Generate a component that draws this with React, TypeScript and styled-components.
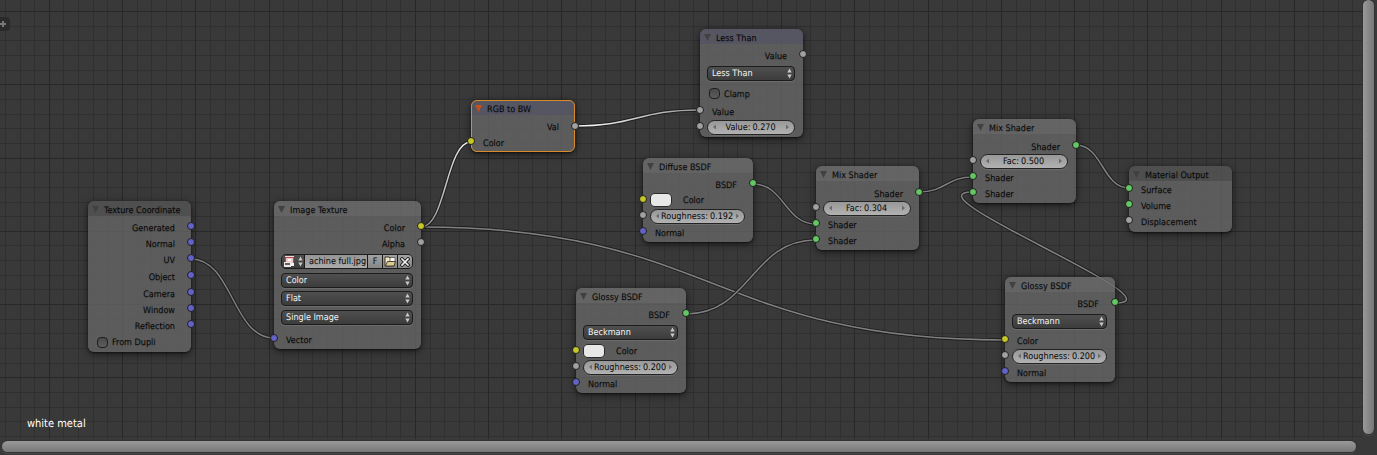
import React, { useId } from "react";
import styled, { createGlobalStyle, css } from "styled-components";

const GlobalStyle = createGlobalStyle`
  *, *::before, *::after { box-sizing: border-box; }
  body {
    margin: 0;
    background: #393939;
    font-family: "DejaVu Sans Condensed", "DejaVu Sans", sans-serif;
    font-size: 9px;
    line-height: 14px;
    color: #050505;
    text-rendering: geometricPrecision;
  }
  button, input, select {
    font: inherit;
    color: inherit;
    text-rendering: inherit;
    margin: 0;
    padding: 0;
    border: 0;
    background: none;
    appearance: none;
    border-radius: 0;
    outline: none;
  }
`;

/* ---------- editor shell ---------- */

const Editor = styled.main`
  display: grid;
  grid-template-columns: 1fr 15px;
  grid-template-rows: 1fr 16px;
  height: 100vh;
  overflow: hidden;
`;

const Canvas = styled.section`
  position: relative;
  overflow: hidden;
`;

const Layer = styled.svg`
  position: absolute;
  inset: 0;
  width: 100%;
  height: 100%;
`;

const ScrollBar = styled.div<{ $vertical?: boolean }>`
  border-radius: 6px;
  ${(p) =>
    p.$vertical
      ? css`
          margin: 0 3px 5px 1px;
          background: linear-gradient(90deg, #999, #777);
        `
      : css`
          margin: 2px 6px 3px 2px;
          background: linear-gradient(#999, #777);
        `}
  box-shadow: 0 0 0 1px #323232, 0 2px 0 #484848;
`;

const RegionToggle = styled.button`
  position: absolute;
  left: 0;
  top: 17px;
  width: 10px;
  height: 14px;
  display: flex;
  align-items: center;
  background: #2a2a2a;
  border-radius: 0 4px 4px 0;
`;

const MaterialName = styled.p`
  position: absolute;
  left: 27px;
  bottom: 7px;
  margin: 0;
  font-size: 11px;
  line-height: 16px;
  color: #fff;
`;

/* ---------- node parts ---------- */

type Tone = "input" | "texture" | "converter" | "shader" | "output";

const headerColor: Record<Tone, string> = {
  input: "rgba(60, 60, 60, 0.4)",
  texture: "rgba(122, 122, 122, 0.25)",
  converter: "rgba(80, 80, 108, 0.45)",
  shader: "rgba(122, 122, 122, 0.25)",
  output: "rgba(60, 60, 60, 0.4)",
};

const NodeBox = styled.article<{ $x: number; $y: number; $w: number; $active?: boolean }>`
  position: absolute;
  left: ${(p) => p.$x}px;
  top: ${(p) => p.$y}px;
  width: ${(p) => p.$w}px;
  border-radius: 6px;
  background: rgba(104, 104, 104, 0.75);
  box-shadow: 0 1px 2px rgba(0, 0, 0, 0.5), 0 2px 8px rgba(0, 0, 0, 0.55);
  text-shadow: 0 1px 1px rgba(0, 0, 0, 0.18);

  ${(p) =>
    p.$active &&
    css`
      &::before {
        content: "";
        position: absolute;
        inset: 0;
        border: 1px solid #d98a2b;
        border-radius: 6px;
        pointer-events: none;
      }
    `}
`;

const Header = styled.header<{ $tone: Tone }>`
  display: flex;
  align-items: center;
  gap: 5px;
  height: 15px;
  padding: 2px 4px 0;
  border-radius: 6px 6px 0 0;
  background: ${(p) => headerColor[p.$tone]};
`;

const Collapse = styled.button<{ $active?: boolean }>`
  display: flex;
  width: 7px;
  height: 14px;
  align-items: center;
  color: ${(p) => (p.$active ? "#c4501c" : "#414141")};
`;

const Title = styled.h2`
  margin: 0;
  padding-top: 2px;
  font-size: 9px;
  line-height: 14px;
  font-weight: 400;
  white-space: nowrap;
`;

const Body = styled.div<{ $pad: number; $end: number }>`
  display: flex;
  flex-direction: column;
  padding: ${(p) => p.$pad}px 0 ${(p) => p.$end}px;
`;

const Row = styled.div<{ $h?: number; $kind?: "out" | "in" | "widget" }>`
  position: relative;
  display: flex;
  align-items: center;
  height: ${(p) => p.$h ?? 16}px;
  ${(p) =>
    p.$kind === "out"
      ? "justify-content: flex-end; padding: 3px 16px 0 12px;"
      : p.$kind === "in"
        ? "padding: 3px 16px 0 12px;"
        : "padding: 0 8px 0 7px;"}
`;

const SOCKET = { vector: "#6363c7", color: "#c7c729", value: "#a1a1a1", shader: "#63c763" };
type SocketKind = keyof typeof SOCKET;

const Socket = styled.i<{ $kind: SocketKind; $side: "left" | "right" }>`
  position: absolute;
  ${(p) => p.$side}: -4px;
  top: calc(50% - 5px);
  width: 8px;
  height: 8px;
  border-radius: 50%;
  border: 1px solid #1f1f1f;
  background: ${(p) => SOCKET[p.$kind]};
`;

const SelectBox = styled.div`
  position: relative;
  flex: 1;
  height: 15px;
  border: 1px solid #1c1c1c;
  border-radius: 4px;
  background: linear-gradient(#4f4f4f, #3c3c3c);
  box-shadow: 0 1px 0 rgba(255, 255, 255, 0.1);
  color: #f4f4f4;

  select {
    display: block;
    width: 100%;
    height: 13px;
    padding: 2px 12px 0 4px;
    line-height: 11px;
    text-shadow: none;
  }
  svg {
    position: absolute;
    right: 2px;
    top: 1px;
    pointer-events: none;
  }
`;

const NumberBox = styled.label`
  display: flex;
  flex: 1;
  align-items: center;
  justify-content: space-between;
  height: 15px;
  padding: 0 5px;
  border: 1px solid #232323;
  border-radius: 8px;
  background: linear-gradient(#989898, #b2b2b2);
  box-shadow: 0 1px 0 rgba(255, 255, 255, 0.1);
  white-space: nowrap;
  text-shadow: none;
`;

const NumberText = styled.span`
  display: flex;
  gap: 2px;
  padding-top: 1px;
  line-height: 12px;

  input {
    width: 24px;
    height: 12px;
  }
`;

const CheckLabel = styled.label`
  display: flex;
  align-items: center;
  gap: 4px;
  padding-left: 2px;

  input {
    width: 11px;
    height: 11px;
    border: 1px solid #1e1e1e;
    border-radius: 4px;
    background: linear-gradient(#4a4a4a, #5c5c5c);
  }
  span {
    padding-top: 2px;
  }
`;

const SwatchLabel = styled.label`
  display: flex;
  align-items: center;
  gap: 11px;

  input {
    width: 22px;
    height: 14px;
    border: 1px solid #2b2b2b;
    border-radius: 5px;
    overflow: hidden;
    background: #e7e7e7;
  }
  input::-webkit-color-swatch-wrapper { padding: 0; }
  input::-webkit-color-swatch { border: 0; }
  span {
    padding-top: 2px;
  }
`;

const ImageBar = styled.div`
  display: flex;
  flex: 1;
  height: 15px;
  border: 1px solid #1c1c1c;
  border-radius: 5px;
  overflow: hidden;
  background: #1c1c1c;
  gap: 1px;
  text-shadow: none;
`;

const BarButton = styled.button<{ $w: number; $dark?: boolean }>`
  display: flex;
  flex: none;
  align-items: center;
  justify-content: center;
  gap: 3px;
  width: ${(p) => p.$w}px;
  height: 13px;
  padding-top: 1px;
  background: ${(p) => (p.$dark ? "linear-gradient(#4f4f4f, #3c3c3c)" : "linear-gradient(#a2a2a2, #868686)")};
`;

const FileName = styled.input`
  && {
    flex: 1;
    min-width: 0;
    height: 13px;
    padding: 2px 0 0 4px;
    background: linear-gradient(#959595, #ababab);
  }
`;

/* ---------- glyphs ---------- */

const Triangle = () => (
  <svg width="7" height="7" viewBox="0 0 7 7" aria-hidden="true">
    <path d="M0 0h7L3.5 7z" fill="currentColor" />
  </svg>
);

const UpDown = () => (
  <svg width="5" height="11" viewBox="0 0 5 11" aria-hidden="true">
    <path d="M2.5 0.5L4.7 4.5H.3zM2.5 10.5L.3 6.5h4.4z" fill="#c8c8c8" />
  </svg>
);

const Arrow = ({ right }: { right?: boolean }) => (
  <svg width="3" height="6" viewBox="0 0 3 6" aria-hidden="true">
    <path d={right ? "M0 0.5L3 3L0 5.5z" : "M3 0.5L0 3L3 5.5z"} fill="#6c6c6c" />
  </svg>
);

const ImageGlyph = () => (
  <svg width="11" height="11" viewBox="0 0 11 11" aria-hidden="true">
    <rect x="1" y="0" width="9" height="9" fill="#b9474a" />
    <rect x="1" y="0" width="9" height="1" fill="#e9dede" />
    <rect x="2" y="2" width="7" height="5" fill="#f0c9c4" />
    <rect x="4" y="3" width="3" height="2" fill="#fff" />
    <rect x="0" y="6" width="7" height="5" fill="#e6e6e6" />
    <rect x="1" y="7" width="5" height="2" fill="#7b5558" />
    <rect x="7" y="7" width="3" height="3" fill="#f3f3f3" />
  </svg>
);

const FolderGlyph = () => (
  <svg width="12" height="11" viewBox="0 0 12 11" aria-hidden="true">
    <path d="M1 1h4l1 1h4v8H1z" fill="#efe6c4" stroke="#3c3728" strokeWidth="1" />
    <path d="M6 1.5h5v4H6z" fill="#fafafa" stroke="#5a5647" strokeWidth="0.8" />
    <path d="M3.5 5.5h8L10 10H1.5z" fill="#d8cb8f" stroke="#3c3728" strokeWidth="0.9" />
  </svg>
);

const CrossGlyph = () => (
  <svg width="10" height="10" viewBox="0 0 10 10" aria-hidden="true">
    <path d="M2 2l6 6M8 2L2 8" stroke="#222" strokeWidth="3.4" strokeLinecap="square" />
    <path d="M2 2l6 6M8 2L2 8" stroke="#f2f2f2" strokeWidth="1.6" strokeLinecap="square" />
  </svg>
);

/* ---------- composed rows ---------- */

const Output = ({ name, kind, h }: { name: string; kind: SocketKind; h?: number }) => (
  <Row $kind="out" $h={h}>
    <span>{name}</span>
    <Socket $kind={kind} $side="right" />
  </Row>
);

const Input = ({ name, kind }: { name: string; kind: SocketKind }) => (
  <Row $kind="in">
    <Socket $kind={kind} $side="left" />
    <span>{name}</span>
  </Row>
);

const Dropdown = ({ value, label, h = 18 }: { value: string; label: string; h?: number }) => (
  <Row $h={h}>
    <SelectBox>
      <select aria-label={label} defaultValue={value}>
        <option>{value}</option>
      </select>
      <UpDown />
    </SelectBox>
  </Row>
);

const NumberField = ({ name, value }: { name: string; value: string }) => {
  const id = useId();
  return (
    <Row>
      <Socket $kind="value" $side="left" />
      <NumberBox htmlFor={id}>
        <Arrow />
        <NumberText>
          {name}:
          <input id={id} type="text" defaultValue={value} />
        </NumberText>
        <Arrow right />
      </NumberBox>
    </Row>
  );
};

const Check = ({ name, h }: { name: string; h: number }) => (
  <Row $h={h}>
    <CheckLabel>
      <input type="checkbox" />
      <span>{name}</span>
    </CheckLabel>
  </Row>
);

const ColorField = () => (
  <Row>
    <Socket $kind="color" $side="left" />
    <SwatchLabel>
      <input type="color" defaultValue="#e7e7e7" />
      <span>Color</span>
    </SwatchLabel>
  </Row>
);

interface NodeProps {
  title: string;
  tone: Tone;
  x: number;
  y: number;
  w: number;
  pad?: number;
  end?: number;
  active?: boolean;
  children: React.ReactNode;
}

const Node = ({ title, tone, x, y, w, pad = 3, end = 2, active, children }: NodeProps) => (
  <NodeBox $x={x} $y={y} $w={w} $active={active}>
    <Header $tone={tone}>
      <Collapse $active={active} aria-label={`Collapse ${title}`}>
        <Triangle />
      </Collapse>
      <Title>{title}</Title>
    </Header>
    <Body $pad={pad} $end={end}>
      {children}
    </Body>
  </NodeBox>
);

/* ---------- grid and links ---------- */

const STEP = 14.647;
const range = (n: number) => Array.from({ length: n }, (_, i) => i);

const Grid = () => (
  <Layer aria-hidden="true" shapeRendering="crispEdges">
    {[false, true].map((major) => (
      <g key={String(major)} fill={major ? "#282828" : "#303030"}>
        {range(280)
          .filter((i) => (i % 5 === 3) === major)
          .map((i) => (
            <rect key={i} x={Math.floor(5.4 + i * STEP)} y="0" width="1" height="100%" />
          ))}
        {range(160)
          .filter((i) => (i % 5 === 0) === major)
          .map((i) => (
            <rect key={i} x="0" y={Math.floor(11.6 + i * STEP)} width="100%" height="1" />
          ))}
      </g>
    ))}
  </Layer>
);

type Link = { from: [number, number]; to: [number, number]; paint?: string };

const links: Link[] = [
  { from: [191, 259], to: [274, 338] },
  { from: [421, 227], to: [1005, 340] },
  { from: [421, 227], to: [471, 142], paint: "url(#fadeIn)" },
  { from: [574, 126], to: [700, 110], paint: "url(#fadeOut)" },
  { from: [753, 184], to: [816, 224] },
  { from: [686, 314], to: [816, 240] },
  { from: [919, 192], to: [973, 177] },
  { from: [1076, 145], to: [1129, 188] },
  { from: [1115, 303], to: [973, 192] },
];

const curve = ({ from: [x0, y0], to: [x1, y1] }: Link) => {
  const d = Math.abs(x1 - x0) / 2;
  return `M${x0} ${y0}C${x0 + d} ${y0} ${x1 - d} ${y1} ${x1} ${y1}`;
};

const Links = () => (
  <Layer aria-hidden="true" fill="none">
    <defs>
      <linearGradient id="fadeIn">
        <stop offset="0" stopColor="#808080" />
        <stop offset="0.7" stopColor="#dcdcdc" />
        <stop offset="1" stopColor="#fff" />
      </linearGradient>
      <linearGradient id="fadeOut">
        <stop offset="0" stopColor="#fff" />
        <stop offset="1" stopColor="#949494" />
      </linearGradient>
    </defs>
    {links.map((link, i) => (
      <g key={i}>
        <path d={curve(link)} stroke="#1e1e1e" strokeWidth="3.4" />
        <path d={curve(link)} stroke={link.paint ?? "#808080"} strokeWidth="1.5" />
      </g>
    ))}
  </Layer>
);

export default function App() {
  return (
    <>
      <GlobalStyle />
      <Editor>
        <Canvas aria-label="Node editor">
          <Grid />
          <Links />

          <RegionToggle aria-label="Show tool shelf">
            <svg width="6" height="6" viewBox="0 0 6 6" aria-hidden="true">
              <path d="M2 0h2v2h2v2H4v2H2V4H0V2h2z" fill="#777" />
            </svg>
          </RegionToggle>

          <Node title="Texture Coordinate" tone="input" x={88} y={201} w={103} end={1}>
            {["Generated", "Normal", "UV", "Object", "Camera", "Window", "Reflection"].map((name) => (
              <Output key={name} name={name} kind="vector" h={name === "Object" ? 18 : 16} />
            ))}
            <Check name="From Dupli" h={18} />
          </Node>

          <Node title="Image Texture" tone="texture" x={274} y={201} w={147}>
            <Output name="Color" kind="color" />
            <Output name="Alpha" kind="value" />
            <Row $h={20}>
              <ImageBar>
                <BarButton $w={22} $dark aria-label="Browse image">
                  <ImageGlyph />
                  <UpDown />
                </BarButton>
                <FileName aria-label="Image name" defaultValue="achine full.jpg" />
                <BarButton $w={14}>F</BarButton>
                <BarButton $w={14} aria-label="Open image">
                  <FolderGlyph />
                </BarButton>
                <BarButton $w={14} aria-label="Unlink image">
                  <CrossGlyph />
                </BarButton>
              </ImageBar>
            </Row>
            <Dropdown label="Color space" value="Color" />
            <Dropdown label="Projection" value="Flat" />
            <Dropdown label="Source" value="Single Image" h={20} />
            <Row $h={4} />
            <Input name="Vector" kind="vector" />
          </Node>

          <Node title="RGB to BW" tone="converter" x={471} y={100} w={104} pad={4} end={2} active>
            <Output name="Val" kind="value" h={15} />
            <Input name="Color" kind="color" />
          </Node>

          <Node title="Less Than" tone="converter" x={700} y={29} w={103}>
            <Output name="Value" kind="value" />
            <Dropdown label="Operation" value="Less Than" h={21} />
            <Check name="Clamp" h={19} />
            <Input name="Value" kind="value" />
            <NumberField name="Value" value="0.270" />
          </Node>

          <Node title="Diffuse BSDF" tone="shader" x={643} y={158} w={110}>
            <Output name="BSDF" kind="shader" />
            <ColorField />
            <NumberField name="Roughness" value="0.192" />
            <Input name="Normal" kind="vector" />
          </Node>

          <Node title="Glossy BSDF" tone="shader" x={576} y={288} w={110}>
            <Output name="BSDF" kind="shader" />
            <Dropdown label="Distribution" value="Beckmann" h={21} />
            <ColorField />
            <NumberField name="Roughness" value="0.200" />
            <Input name="Normal" kind="vector" />
          </Node>

          <Node title="Mix Shader" tone="shader" x={816} y={166} w={103} pad={5}>
            <Output name="Shader" kind="shader" h={14} />
            <NumberField name="Fac" value="0.304" />
            <Input name="Shader" kind="shader" />
            <Input name="Shader" kind="shader" />
          </Node>

          <Node title="Mix Shader" tone="shader" x={973} y={119} w={103} pad={5}>
            <Output name="Shader" kind="shader" h={14} />
            <NumberField name="Fac" value="0.500" />
            <Input name="Shader" kind="shader" />
            <Input name="Shader" kind="shader" />
          </Node>

          <Node title="Material Output" tone="output" x={1129} y={166} w={103} pad={0} end={3}>
            <Input name="Surface" kind="shader" />
            <Input name="Volume" kind="shader" />
            <Input name="Displacement" kind="value" />
          </Node>

          <Node title="Glossy BSDF" tone="shader" x={1005} y={277} w={110}>
            <Output name="BSDF" kind="shader" />
            <Dropdown label="Distribution" value="Beckmann" h={21} />
            <Input name="Color" kind="color" />
            <NumberField name="Roughness" value="0.200" />
            <Input name="Normal" kind="vector" />
          </Node>

          <MaterialName>white metal</MaterialName>
        </Canvas>
        <ScrollBar $vertical role="scrollbar" aria-orientation="vertical" aria-controls="root" aria-valuenow={0} />
        <ScrollBar role="scrollbar" aria-orientation="horizontal" aria-controls="root" aria-valuenow={0} />
      </Editor>
    </>
  );
}
